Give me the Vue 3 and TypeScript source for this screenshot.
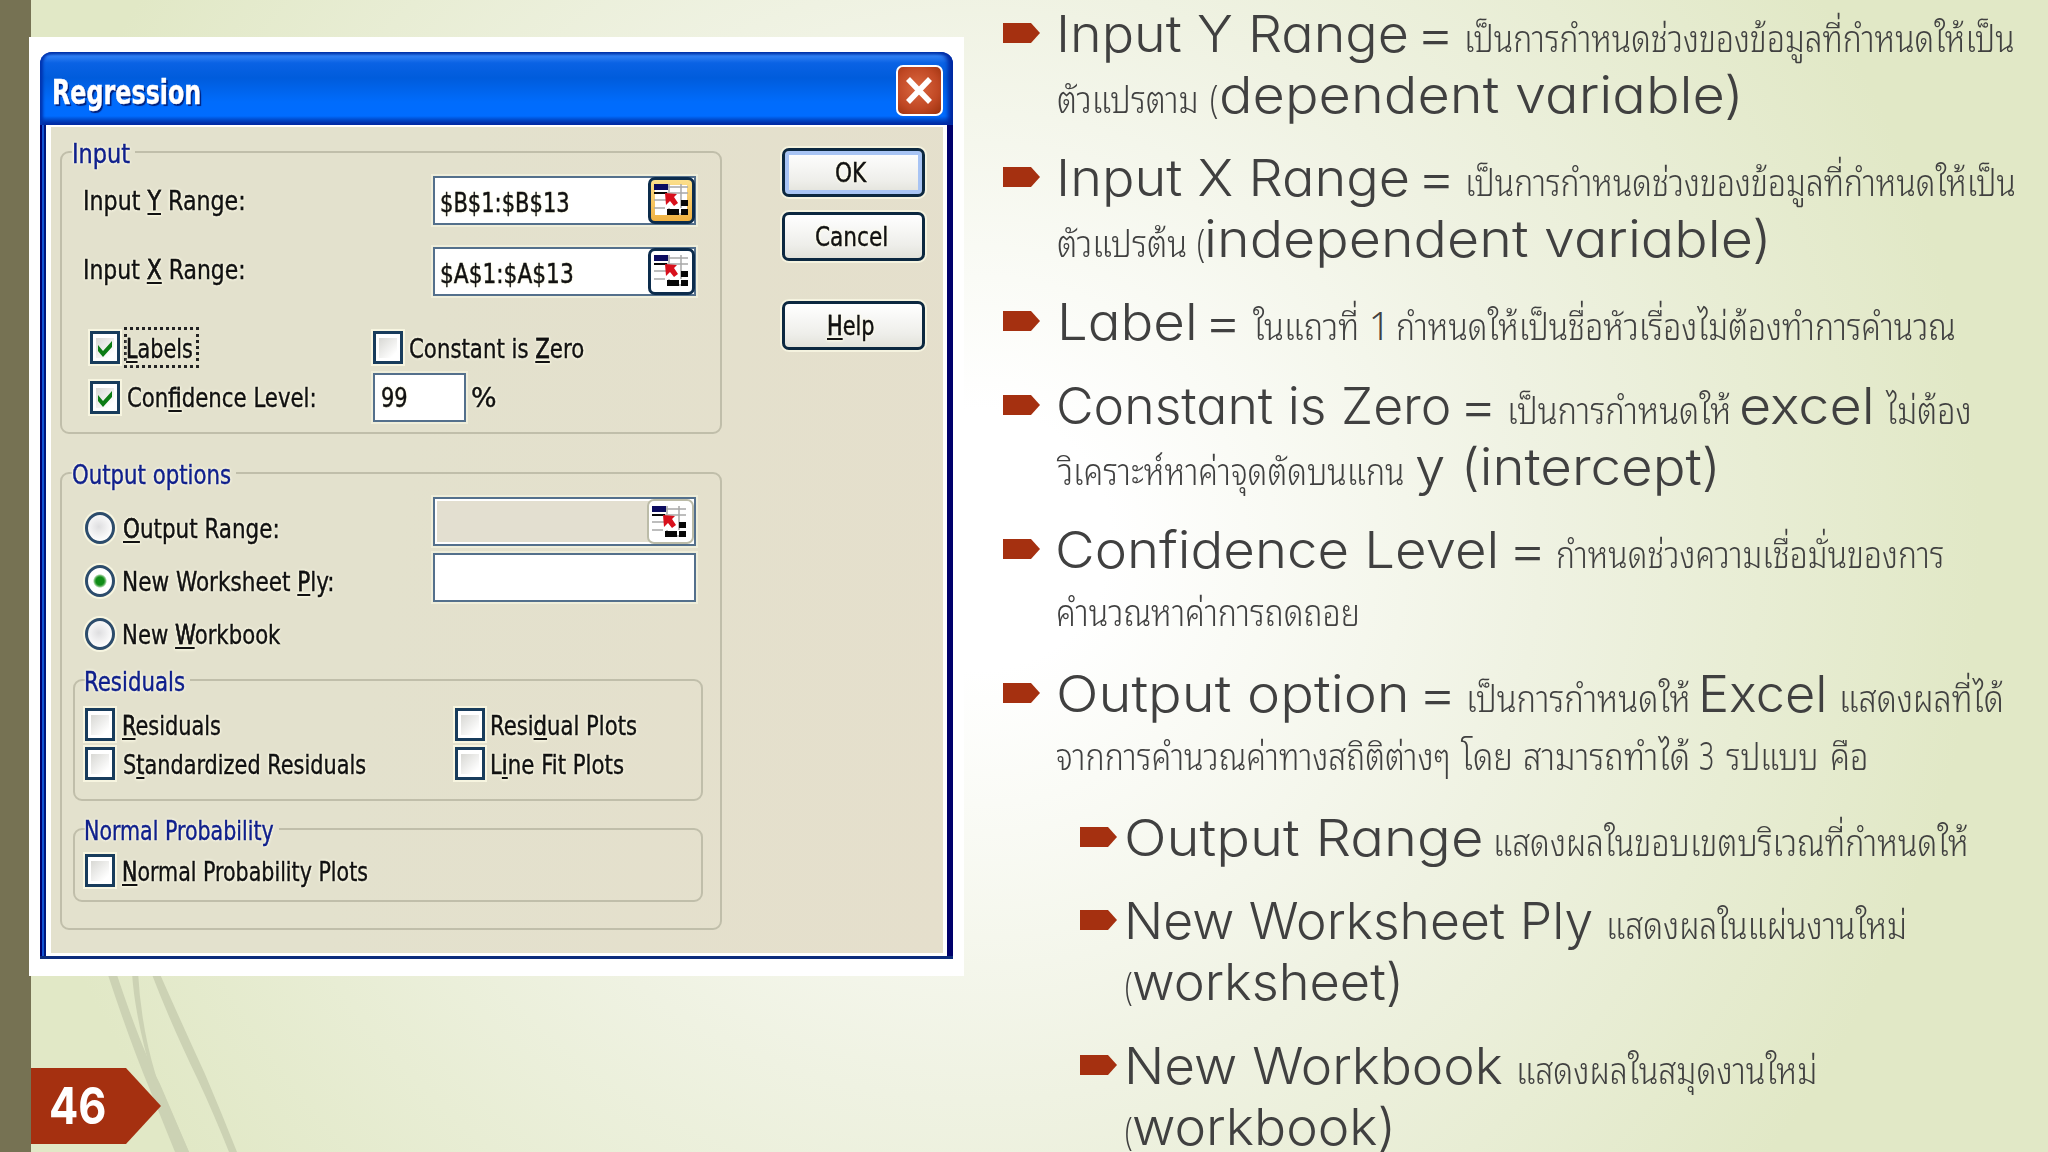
<script setup lang="ts">
import type { Directive } from 'vue'

interface Run {
  text: string
  from: number
  to: number
  thai?: boolean
}
interface Line {
  runs: Run[]
  raised?: boolean
}
interface Bullet {
  sub?: boolean
  lines: Line[]
}

const en = (text: string, from: number, to: number): Run => ({ text, from, to })
const th = (text: string, from: number, to: number): Run => ({ text, from, to, thai: true })

const bullets: Bullet[] = [
  {
    lines: [
      { runs: [en('Input Y Range', 1060.4, 1403.9), en('=', 1422.9, 1448.6), th('เป็นการกำหนดช่วงของข้อมูลที่กำหนดให้เป็น', 1467.5, 2013)] },
      { runs: [th('ตัวแปรตาม', 1057.5, 1196), th('(', 1210.5, 1217.5), en('dependent variable)', 1221, 1733.1)] },
    ],
  },
  {
    lines: [
      { runs: [en('Input X Range', 1060.4, 1405), en('=', 1423.9, 1449.6), th('เป็นการกำหนดช่วงของข้อมูลที่กำหนดให้เป็น', 1468.2, 2014)] },
      { runs: [th('ตัวแปรต้น', 1057.5, 1185), th('(', 1197.5, 1204.3), en('independent variable)', 1207.5, 1761.4)] },
    ],
  },
  {
    lines: [
      {
        runs: [
          en('Label', 1061.4, 1190.7),
          en('=', 1211, 1236),
          th('ในแถวที่', 1253.4, 1356.8),
          th('1', 1371.8, 1381.8),
          th('กำหนดให้เป็นชื่อหัวเรื่องไม่ต้องทำการคำนวณ', 1397.9, 1954.4),
        ],
      },
    ],
  },
  {
    lines: [
      {
        runs: [
          en('Constant is Zero', 1058.6, 1446.8),
          en('=', 1466.4, 1491.8),
          th('เป็นการกำหนดให้', 1510.5, 1730),
          en('excel', 1741.2, 1870.5),
          th('ไม่ต้อง', 1885.5, 1969.4),
        ],
      },
      { runs: [th('วิเคราะห์หาค่าจุดตัดบนแกน', 1056.8, 1403.2), en('y (intercept)', 1416.4, 1716)] },
    ],
  },
  {
    lines: [
      { runs: [en('Confidence Level', 1058.6, 1495.4), en('=', 1515, 1540.9), th('กำหนดช่วงความเชื่อมั่นของการ', 1557.7, 1943.2)] },
      { raised: true, runs: [th('คำนวณหาค่าการถดถอย', 1057.5, 1357.5)] },
    ],
  },
  {
    lines: [
      {
        runs: [
          en('Output option', 1058.9, 1405),
          en('=', 1424.6, 1450.4),
          th('เป็นการกำหนดให้', 1469.3, 1689),
          en('Excel', 1702, 1823.3),
          th('แสดงผลที่ได้', 1842.5, 2003),
        ],
      },
      {
        raised: true,
        runs: [
          th('จากการคำนวณค่าทางสถิติต่างๆ', 1056.8, 1447.9),
          th('โดย', 1460.4, 1511),
          th('สามารถทำได้', 1524.6, 1689),
          th('3', 1699.9, 1713.2),
          th('รปแบบ', 1726.5, 1816.3),
          th('คือ', 1831.4, 1866),
        ],
      },
    ],
  },
  {
    sub: true,
    lines: [{ runs: [en('Output Range', 1126.8, 1477.5), th('แสดงผลในขอบเขตบริเวณที่กำหนดให้', 1496, 1967)] }],
  },
  {
    sub: true,
    lines: [
      { runs: [en('New Worksheet Ply', 1128.2, 1591.9), th('แสดงผลในแผ่นงานใหม่', 1609, 1904.4)] },
      { runs: [th('(', 1125.7, 1132.1), en('worksheet)', 1132.9, 1399)] },
    ],
  },
  {
    sub: true,
    lines: [
      { runs: [en('New Workbook', 1128.2, 1501.8), th('แสดงผลในสมุดงานใหม่', 1519.2, 1814.9)] },
      { runs: [th('(', 1125.7, 1132.1), en('workbook)', 1132.9, 1391)] },
    ],
  },
]

const origin = (b: Bullet): number => (b.sub ? 1122 : 1054)
const gapBefore = (b: Bullet, line: Line, i: number): number =>
  line.runs[i].from - (i === 0 ? origin(b) : line.runs[i - 1].to)

// Fits the inked part of a text run to a width, [gap before it, width].
const context = document.createElement('canvas').getContext('2d')!
const vInk: Directive<HTMLElement, [number, number]> = {
  mounted(el, { value: [gap, width] }) {
    const style = getComputedStyle(el)
    context.font = `${style.fontWeight} ${style.fontSize} ${style.fontFamily}`
    const m = context.measureText(el.textContent ?? '')
    const natural = el.getBoundingClientRect().width
    const left = -m.actualBoundingBoxLeft
    const scale = width / (m.actualBoundingBoxRight - left)
    el.style.transform = `scaleX(${scale})`
    el.style.marginLeft = `${gap - scale * left}px`
    el.style.marginRight = `${width + scale * left - natural}px`
  },
}
</script>

<template>
  <main class="slide">
    <svg class="wisps" viewBox="0 0 300 180" width="300" height="180">
      <path d="M107 0 L116 0 Q142 78 160 112 L189 180 L175 180 Q160 143 150 118 Q130 70 107 0Z" />
      <path d="M132 0 L138 0 Q141 55 156 104 L189 180 L178 180 Q160 132 152 104 Q134 40 132 0Z" />
      <path d="M151 0 L159 0 Q182 52 205 102 Q222 142 237 180 L229 180 Q213 140 198 108 Q170 50 151 0Z" />
    </svg>
    <section class="left">
      <div class="picture">
        <div class="dialog">
          <header class="title">
            <span v-ink="[8, 146]" class="t">Regression</span>
            <div class="close">
              <svg viewBox="0 0 40 44" width="40" height="44"><path d="M9 11 L31 34 M31 11 L9 34" /></svg>
            </div>
          </header>
          <div class="body">
            <div class="sections">
              <div class="group input">
                <div class="legend"><span v-ink="[2, 56]" class="t">Input</span></div>
                <div class="row r1">
                  <span v-ink="[23, 159]" class="t">Input <u>Y</u> Range:</span>
                  <div class="field ref">
                    <span v-ink="[6, 128]" class="t">$B$1:$B$13</span>
                    <div class="pick hot">
                      <svg viewBox="0 0 36 36" width="36" height="36">
                        <path class="grid" d="M1 5H35M1 11H35M1 18H17M1 26H12M28 2V26M16 2V10M16 32H34M16 26V33" />
                        <path class="navy" d="M1 2H15V8H1Z" /><path class="blk" d="M1 10H14V12H1ZM28 18H35V24H28ZM14 27H26V33H14ZM28 27H35V33H28Z" />
                        <path class="arrow" d="M12 11L24 12L21 15L25 21L21 24L17 19L13 23Z" />
                      </svg>
                    </div>
                  </div>
                </div>
                <div class="row r2">
                  <span v-ink="[23, 159]" class="t">Input <u>X</u> Range:</span>
                  <div class="field ref">
                    <span v-ink="[6, 132]" class="t">$A$1:$A$13</span>
                    <div class="pick">
                      <svg viewBox="0 0 36 36" width="36" height="36">
                        <path class="grid" d="M1 5H35M1 11H35M1 18H17M1 26H12M28 2V26M16 2V10M16 32H34M16 26V33" />
                        <path class="navy" d="M1 2H15V8H1Z" /><path class="blk" d="M1 10H14V12H1ZM28 18H35V24H28ZM14 27H26V33H14ZM28 27H35V33H28Z" />
                        <path class="arrow" d="M12 11L24 12L21 15L25 21L21 24L17 19L13 23Z" />
                      </svg>
                    </div>
                  </div>
                </div>
                <div class="row r3">
                  <div class="half">
                    <div class="check"><svg viewBox="0 0 24 26" width="24" height="26"><path d="M5 10 L10 16 L19 6 V12 L10 22 L5 16Z" /></svg></div>
                    <div class="focus"><span v-ink="[1, 65]" class="t"><u>L</u>abels</span></div>
                  </div>
                  <div class="check"></div>
                  <span v-ink="[7, 174]" class="t">Constant is <u>Z</u>ero</span>
                </div>
                <div class="row r4">
                  <div class="half">
                    <div class="check"><svg viewBox="0 0 24 26" width="24" height="26"><path d="M5 10 L10 16 L19 6 V12 L10 22 L5 16Z" /></svg></div>
                    <span v-ink="[8, 187]" class="t">Con<u>f</u>idence Level:</span>
                  </div>
                  <div class="field small"><span v-ink="[7, 25]" class="t">99</span></div>
                  <span v-ink="[6, 23]" class="t">%</span>
                </div>
              </div>

              <div class="group output">
                <div class="legend"><span v-ink="[1, 158]" class="t">Output options</span></div>
                <div class="targets">
                  <div class="radios">
                    <div class="row"><i class="radio"></i><span v-ink="[9, 154]" class="t"><u>O</u>utput Range:</span></div>
                    <div class="row"><i class="radio on"></i><span v-ink="[9, 209]" class="t">New Worksheet <u>P</u>ly:</span></div>
                    <div class="row"><i class="radio"></i><span v-ink="[9, 157]" class="t">New <u>W</u>orkbook</span></div>
                  </div>
                  <div class="boxes">
                    <div class="field off">
                      <div class="pick flat">
                        <svg viewBox="0 0 36 36" width="36" height="36">
                          <path class="grid" d="M1 5H35M1 11H35M1 18H17M1 26H12M28 2V26M16 2V10M16 32H34M16 26V33" />
                          <path class="navy" d="M1 2H15V8H1Z" /><path class="blk" d="M1 10H14V12H1ZM28 18H35V24H28ZM14 27H26V33H14ZM28 27H35V33H28Z" />
                          <path class="arrow" d="M12 11L24 12L21 15L25 21L21 24L17 19L13 23Z" />
                        </svg>
                      </div>
                    </div>
                    <div class="field"></div>
                  </div>
                </div>
                <div class="group residuals">
                  <div class="legend"><span v-ink="[1, 99]" class="t">Residuals</span></div>
                  <div class="row"><div class="check"></div><span v-ink="[9, 97]" class="t"><u>R</u>esiduals</span></div>
                  <div class="row"><div class="check"></div><span v-ink="[7, 145]" class="t">Resi<u>d</u>ual Plots</span></div>
                  <div class="row"><div class="check"></div><span v-ink="[9, 242]" class="t">S<u>t</u>andardized Residuals</span></div>
                  <div class="row"><div class="check"></div><span v-ink="[7, 132]" class="t">L<u>i</u>ne Fit Plots</span></div>
                </div>
                <div class="group normal">
                  <div class="legend"><span v-ink="[1, 188]" class="t">Normal Probability</span></div>
                  <div class="row"><div class="check"></div><span v-ink="[9, 244]" class="t"><u>N</u>ormal Probability Plots</span></div>
                </div>
              </div>
            </div>
            <div class="actions">
              <div class="btn primary"><span v-ink="[0, 31]" class="t">OK</span></div>
              <div class="btn"><span v-ink="[0, 71]" class="t">Cancel</span></div>
              <div class="btn help"><span v-ink="[0, 45]" class="t"><u>H</u>elp</span></div>
            </div>
          </div>
        </div>
      </div>
      <div class="page"><span v-ink="[20, 54]">46</span></div>
    </section>

    <ul class="notes">
      <li v-for="(b, n) in bullets" :key="n" :class="{ sub: b.sub }">
        <svg class="mark" viewBox="0 0 37 20" width="37" height="20"><path d="M0 0H28L37 10L28 20H0Z" /></svg>
        <div class="lines">
          <div v-for="(line, k) in b.lines" :key="k" class="line" :class="{ raised: line.raised }">
            <span
              v-for="(run, i) in line.runs"
              :key="i"
              v-ink="[gapBefore(b, line, i), run.to - run.from]"
              class="run"
              :class="{ thai: run.thai }"
            >{{ run.text }}</span>
          </div>
        </div>
      </li>
    </ul>
  </main>
</template>

<style>
body {
  margin: 0;
  overflow: hidden;
}
</style>

<style scoped>
.slide {
  position: relative;
  box-sizing: border-box;
  width: 2048px;
  height: 1152px;
  overflow: hidden;
  display: flex;
  padding-left: 29px;
  background:
    linear-gradient(#767253, #767253) 0 0 / 31px 100% no-repeat,
    radial-gradient(circle at 980px 540px, #fff 130px, #eff2e2 560px, #e1e8c6 1000px);
}
.wisps {
  position: absolute;
  left: 0;
  top: 972px;
  fill: #ccd2b4;
}
.left {
  position: relative;
  width: 935px;
  flex: none;
  padding-top: 37px;
}
.picture {
  box-sizing: border-box;
  height: 939px;
  padding: 15px 11px 17px;
  background: #fff;
}
.dialog {
  box-sizing: border-box;
  height: 907px;
  display: flex;
  flex-direction: column;
  border-bottom: 3px solid #0c2c7c;
  border-radius: 12px 12px 0 0;
  background: linear-gradient(90deg, #00006c 0 2px, #1254d4 2px 4px, #00187c 4px 6px, #fff 6px 907px, #00006c 907px);
}
.title {
  box-sizing: border-box;
  height: 73px;
  flex: none;
  display: flex;
  align-items: flex-start;
  justify-content: space-between;
  padding: 13px 10px 0 6px;
  border-radius: 12px 12px 0 0;
  background: linear-gradient(#0036a8 0, #2f80f4 4px, #0a62e4 11px, #005cdc 26px, #006cfc 50px, #006cff 64px, #0048c8 68px, #00249c 73px);
  box-shadow: inset 3px 0 3px #0034b0, inset -5px 0 4px #0028a0;
}
.title .t {
  margin-top: 3px;
  color: #fff;
  font: bold 33px/50px 'DejaVu Sans Condensed', 'DejaVu Sans', sans-serif;
  text-shadow: 2px 2px 1px #00207c;
}
.close {
  box-sizing: border-box;
  width: 47px;
  height: 51px;
  padding: 1px;
  border: 2px solid #fff;
  border-radius: 7px;
  background: radial-gradient(circle at 45% 45%, #dc6840, #c04824 60%, #98300c);
}
.close svg {
  fill: none;
  stroke: #fff;
  stroke-width: 5.5;
}
.body {
  flex: 1;
  display: flex;
  margin: 2px 10px 3px 11px;
  background: linear-gradient(100deg, #e3e1cd 40%, #e5dfcc 100%);
}
.sections {
  width: 662px;
  padding: 24px 0 0 9px;
}
.group {
  position: relative;
  box-sizing: border-box;
  border: 2px solid #c0beaa;
  border-radius: 9px;
}
.legend {
  position: absolute;
  left: 10px;
  top: -12px;
  display: flex;
  padding-right: 5px;
  background: #e3e1cd;
  line-height: 26px;
}
.t {
  display: block;
  flex: none;
  white-space: pre;
  transform-origin: 0 50%;
  color: #111;
  font: 26px/26px 'DejaVu Sans Condensed', 'DejaVu Sans', sans-serif;
  -webkit-text-stroke: 0.4px;
  text-shadow: 0 0 2px #fdfbe8, 0 0 3px #fdfbe8, 0 0 4px #fdfbe8;
}
.t u {
  text-decoration-thickness: 2px;
  text-underline-offset: 3px;
  text-decoration-skip-ink: none;
}
.legend .t {
  color: #10208c;
}
.row {
  display: flex;
  align-items: center;
}
.input {
  height: 283px;
  padding: 23px 24px 0 0;
}
.r1,
.r2,
.r4 {
  height: 49px;
}
.r2 {
  margin-top: 22px;
}
.r2 > .t {
  margin-bottom: 4px;
}
.r3 {
  height: 41px;
  margin-top: 31px;
}
.r3 > .t,
.focus .t {
  padding-top: 2px;
}
.r4 {
  margin-top: 5px;
}
.half {
  box-sizing: border-box;
  width: 311px;
  display: flex;
  align-items: center;
  padding-left: 28px;
}
.field {
  box-sizing: border-box;
  width: 263px;
  height: 49px;
  flex: none;
  display: flex;
  align-items: center;
  border: 2px solid #54708c;
  background: #fff;
  box-shadow: 0 0 0 2px #efeeda;
}
.ref .t {
  padding-top: 4px;
}
.ref {
  margin-left: auto;
}
.small {
  width: 93px;
}
.pick {
  box-sizing: border-box;
  width: 47px;
  height: 47px;
  margin-left: auto;
  margin-right: -1px;
  padding: 2px;
  border: 3px solid #0c2c4c;
  border-radius: 7px;
  background: #fff;
}
.hot {
  background: linear-gradient(#fce08c, #f0b040);
}
.hot svg {
  background: linear-gradient(#fff, #fff) 50% 50% / 32px 30px no-repeat;
}
.flat {
  margin-right: 0;
  height: 45px;
  border: 2px solid #bcbca8;
  padding: 3px 2px;
}
.pick svg {
  display: block;
}
.grid {
  fill: none;
  stroke: #a8a8a8;
  stroke-width: 1.5;
}
.navy {
  fill: #0c0c60;
}
.blk {
  fill: #080808;
}
.arrow {
  fill: #d8101c;
}
.off {
  background: #e3dfd0;
  box-shadow: inset 0 0 0 2px #fff, 0 0 0 2px #efeeda;
}
.check {
  box-sizing: border-box;
  width: 30px;
  height: 33px;
  flex: none;
  padding: 1px 0;
  border: 3px solid #183c5c;
  background: linear-gradient(135deg, #d8d8d4, #fff 85%) 50% 50% / 18px 20px no-repeat #fff;
  box-shadow: 0 0 0 2px #f7f5e0;
}
.check svg {
  display: block;
  fill: #0c7c14;
}
.focus {
  box-sizing: border-box;
  width: 75px;
  height: 41px;
  display: flex;
  align-items: center;
  margin-left: 4px;
  border: 3px dotted #222;
}
.output {
  height: 458px;
  margin-top: 38px;
}
.targets {
  display: flex;
  justify-content: space-between;
  height: 205px;
  padding-right: 24px;
}
.radios {
  padding: 37px 0 0 23px;
}
.radios .row {
  height: 33px;
  margin-bottom: 20px;
}
.boxes {
  display: flex;
  flex-direction: column;
  gap: 7px;
  padding-top: 23px;
}
.radio {
  box-sizing: border-box;
  width: 30px;
  height: 32px;
  border: 3px solid #2c4c6c;
  border-radius: 50%;
  background: radial-gradient(circle at 45% 45%, #dedee0, #fff 75%);
  box-shadow: 0 0 0 2px #f7f5e0;
}
.on {
  background: radial-gradient(circle, #108c18 0 4px, #6cb86c 5.5px, #fff 7px);
}
.residuals {
  display: grid;
  grid-template-columns: 370px 1fr;
  grid-auto-rows: 33px;
  row-gap: 6px;
  height: 122px;
  margin: 0 17px 0 11px;
  padding: 27px 0 0 10px;
}
.normal {
  height: 74px;
  margin: 27px 17px 0 11px;
  padding: 24px 0 0 10px;
}
.residuals .row .t,
.normal .row .t,
.radios .t {
  padding-top: 3px;
}
.actions {
  display: flex;
  flex-direction: column;
  gap: 15px;
  padding: 21px 0 0 60px;
}
.btn {
  box-sizing: border-box;
  width: 143px;
  height: 49px;
  display: flex;
  align-items: center;
  justify-content: center;
  padding: 1px 4px 0 0;
  border: 3px solid #0c2840;
  border-radius: 7px;
  background: linear-gradient(#fff, #eeeeea 70%, #e2e2da);
  box-shadow: 0 0 0 2px #f5f3df;
}
.primary {
  box-shadow: inset 0 0 0 4px #a8c4f4, 0 0 0 2px #f5f3df;
}
.help {
  margin-top: 25px;
}
.page {
  box-sizing: border-box;
  display: flex;
  width: 130px;
  height: 76px;
  margin: 92px 0 0 2px;
  background: #a53010;
  clip-path: polygon(0 0, 95px 0, 100% 50%, 95px 100%, 0 100%);
  color: #fff;
  font: bold 51px/76px Inter, sans-serif;
}
.page span {
  transform-origin: 0 50%;
}
.notes {
  list-style: none;
  margin: 0;
  padding: 3px 0 0 39px;
  display: flex;
  flex-direction: column;
  gap: 22.2px;
}
li {
  display: flex;
  align-items: flex-start;
  gap: 14px;
}
.sub {
  margin-left: 77px;
  gap: 5px;
}
.mark {
  flex: none;
  margin-top: 20px;
  fill: #a53010;
}
.line {
  display: flex;
  align-items: baseline;
  height: 61px;
  color: #404040;
  font: 51px/61px Inter, sans-serif;
}
.line::before {
  content: '\200b';
  width: 0;
}
.raised {
  margin-top: -2.5px;
  margin-bottom: 2.5px;
}
.run {
  flex: none;
  white-space: pre;
  line-height: 0;
  transform-origin: 0 50%;
  font-weight: 300;
  font-feature-settings: 'cv11';
}
.thai {
  font-family: 'Noto Sans Thai Looped', 'Noto Looped Thai', Loma, Garuda, 'Noto Sans Thai', 'Noto Sans', sans-serif;
  font-size: 38px;
  font-weight: 300;
}
</style>
